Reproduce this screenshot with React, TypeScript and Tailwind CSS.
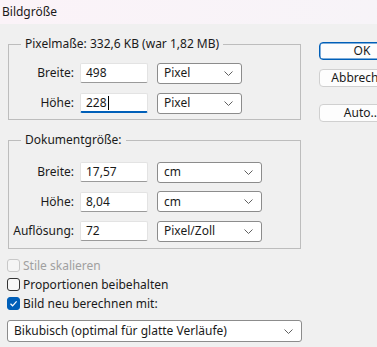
import React from "react";

function Chevron() {
  return (
    <svg width="9" height="5" viewBox="0 0 9 5" className="shrink-0">
      <path d="M0.5 0.5 L4.5 4.5 L8.5 0.5" fill="none" stroke="#606060" strokeWidth="1" />
    </svg>
  );
}

function Field({ value, active }: { value: string; active?: boolean }) {
  return (
    <div
      className={
        "ml-[6px] w-[68px] h-[20px] bg-white rounded-[2px] border border-[#e3e3e3] flex items-center pl-[5px] " +
        (active ? "border-b-2 border-b-[#005fb8]" : "border-b-[#9a9a9a]")
      }
    >
      <span>{value}</span>
      {active && <span className="ml-[1px] w-px h-[14px] bg-black" />}
    </div>
  );
}

function Select({ value, wide }: { value: string; wide?: boolean }) {
  return (
    <div
      className={
        "ml-[9px] h-[21px] bg-white rounded-[3px] border border-[#8c8c8c] flex items-center justify-between pl-[6px] pr-[8px] " +
        (wide ? "w-[105px]" : "w-[85px]")
      }
    >
      <span>{value}</span>
      <Chevron />
    </div>
  );
}

function Row({ label, value, unit, active, wide }: { label: string; value: string; unit: string; active?: boolean; wide?: boolean }) {
  return (
    <div className="flex items-center h-[20px]">
      <span className="w-[65px] text-right">{label}</span>
      <Field value={value} active={active} />
      <Select value={unit} wide={wide} />
    </div>
  );
}

function Check({ label, checked, disabled }: { label: string; checked?: boolean; disabled?: boolean }) {
  return (
    <div className="flex items-center h-[19px] -ml-px">
      <div
        className={
          "w-[13px] h-[13px] rounded-[3px] border flex items-center justify-center " +
          (checked
            ? "bg-[#005fb8] border-[#005fb8]"
            : disabled
            ? "border-[#c8c8c8] bg-[#f5f5f5]"
            : "border-[#333333] bg-[#f7f7f7]")
        }
      >
        {checked && (
          <svg width="11" height="11" viewBox="0 0 11 11">
            <polyline points="2.5,5.8 4.6,7.8 8.6,3.4" fill="none" stroke="white" strokeWidth="1.2" />
          </svg>
        )}
      </div>
      <span className={"ml-[3px] " + (disabled ? "text-[#a0a0a0]" : "")}>{label}</span>
    </div>
  );
}

function Button({ children, primary }: { children: React.ReactNode; primary?: boolean }) {
  return (
    <div
      className={
        "w-[86px] h-[18px] rounded-[4px] bg-[#fdfdfd] flex items-center justify-center border " +
        (primary ? "border-[#005fb8] shadow-[inset_0_0_0_0.5px_#005fb8]" : "border-[#d0d0d0]")
      }
    >
      {children}
    </div>
  );
}

export default function App() {
  return (
    <div className="w-[377px] h-[347px] overflow-hidden bg-[#f0f0f0] text-[12px] leading-[16px] text-[#1a1a1a] font-['Noto_Sans',sans-serif]">
      <div className="h-[24px] pl-[2px] flex items-center bg-gradient-to-r from-[#fbf3f8] to-[#f7f4f8]">
        Bildgröße
      </div>
      <div className="flex">
        <div className="ml-[8px] w-[293px] pt-[12px]">
          <fieldset className="border border-[#bdbdbd] pt-[11px] pb-[6px]">
            <legend className="ml-[12px] px-[4px]">Pixelmaße: 332,6 KB (war 1,82 MB)</legend>
            <div className="flex flex-col gap-[10px]">
              <Row label="Breite:" value="498" unit="Pixel" />
              <Row label="Höhe:" value="228" unit="Pixel" active />
            </div>
          </fieldset>
          <fieldset className="mt-[12px] border border-[#bdbdbd] pt-[14px] pb-[7px]">
            <legend className="ml-[12px] px-[4px]">Dokumentgröße:</legend>
            <div className="flex flex-col gap-[9.5px]">
              <Row label="Breite:" value="17,57" unit="cm" wide />
              <Row label="Höhe:" value="8,04" unit="cm" wide />
              <Row label="Auflösung:" value="72" unit="Pixel/Zoll" wide />
            </div>
          </fieldset>
          <div className="mt-[7px] flex flex-col">
            <Check label="Stile skalieren" disabled />
            <Check label="Proportionen beibehalten" />
            <Check label="Bild neu berechnen mit:" checked />
          </div>
          <div className="mt-[7px] -ml-px w-[295px] h-[22px] bg-white rounded-[3px] border border-[#8c8c8c] flex items-center justify-between pl-[6px] pr-[8px]">
            <span>Bikubisch (optimal für glatte Verläufe)</span>
            <Chevron />
          </div>
        </div>
        <div className="ml-[18px] pt-[18px] flex flex-col">
          <Button primary>OK</Button>
          <div className="mt-[9px]">
            <Button>Abbrechen</Button>
          </div>
          <div className="mt-[17px]">
            <Button>Auto...</Button>
          </div>
        </div>
      </div>
    </div>
  );
}
